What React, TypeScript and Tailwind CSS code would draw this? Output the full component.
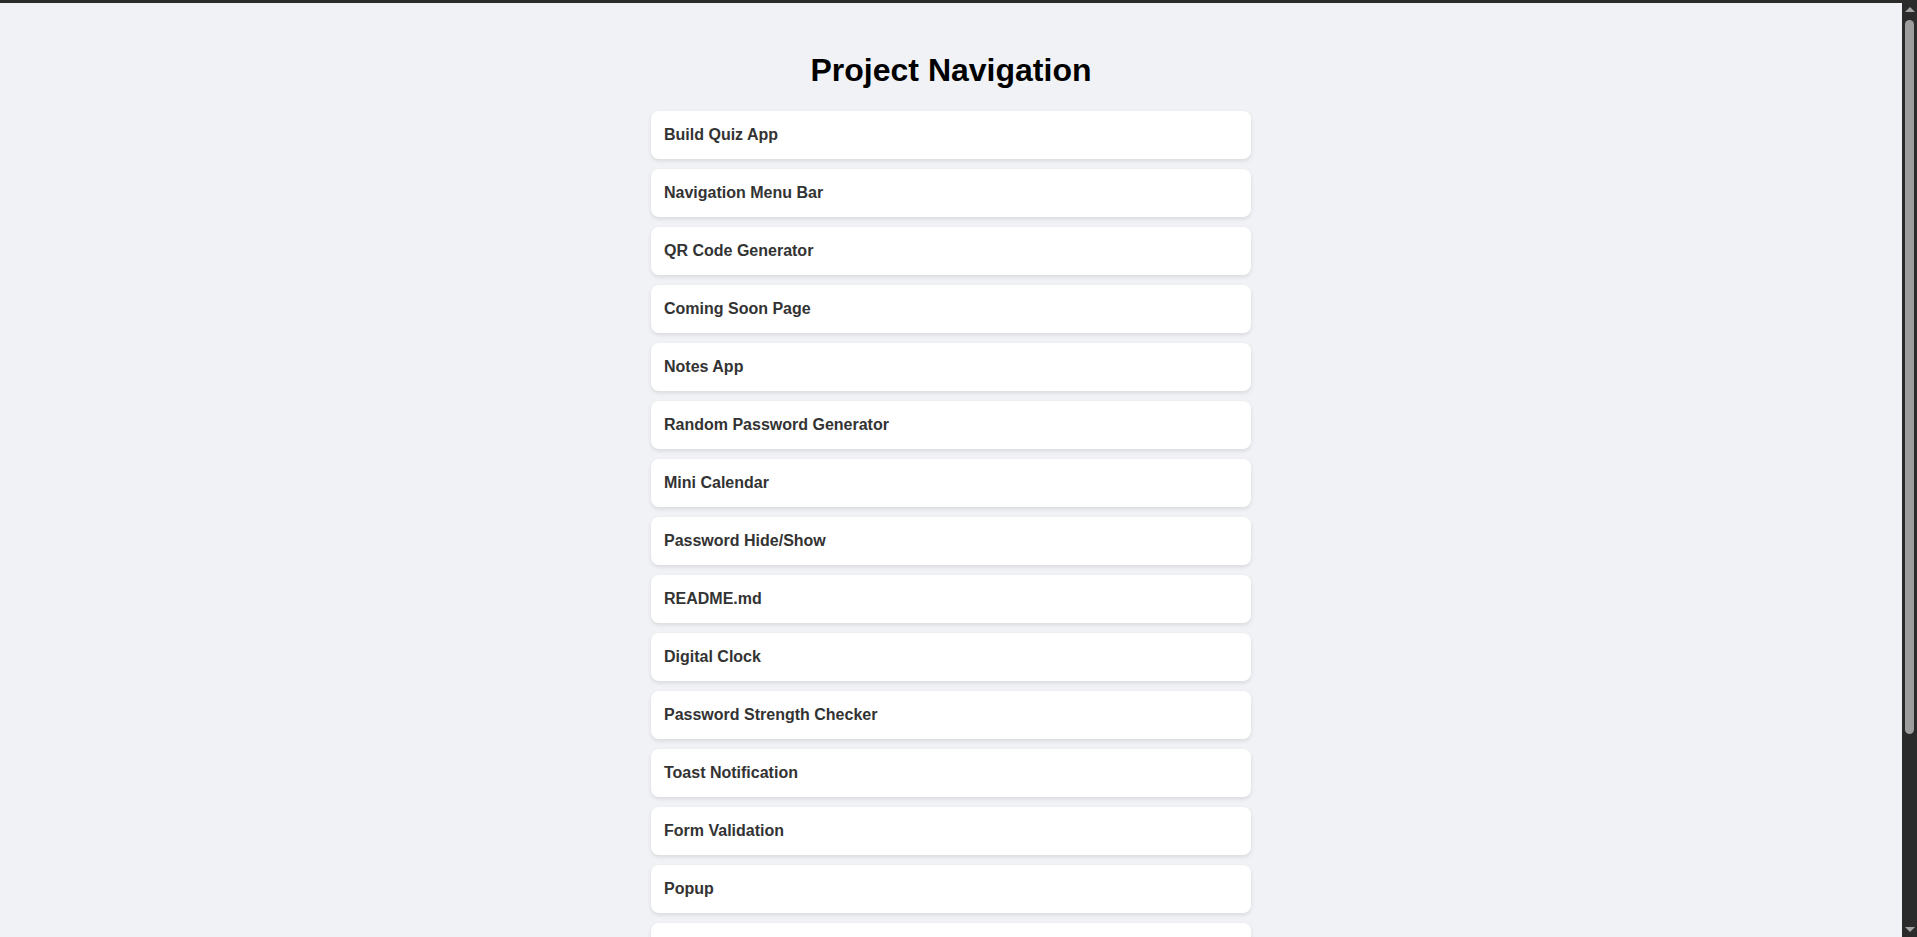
const projects = [
  "Build Quiz App",
  "Navigation Menu Bar",
  "QR Code Generator",
  "Coming Soon Page",
  "Notes App",
  "Random Password Generator",
  "Mini Calendar",
  "Password Hide/Show",
  "README.md",
  "Digital Clock",
  "Password Strength Checker",
  "Toast Notification",
  "Form Validation",
  "Popup",
  "Image Slider",
  "Weather App",
  "To-Do List",
  "Age Calculator",
];

function Scrollbar() {
  // browser-like scrollbar drawn over the right edge
  return (
    <div className="fixed top-0 right-0 h-screen w-[15px] bg-[#2b2b2b] flex flex-col items-center pt-[7px] pb-[5px]">
      <div className="w-0 h-0 border-l-[5px] border-r-[5px] border-b-[5px] border-l-transparent border-r-transparent border-b-[#a3a3a3]" />
      <div className="mt-[8px] h-[714px] w-[9px] rounded-full bg-[#9d9d9d]" />
      <div className="flex-1" />
      <div className="w-0 h-0 border-l-[5px] border-r-[5px] border-t-[5px] border-l-transparent border-r-transparent border-t-[#a3a3a3]" />
    </div>
  );
}

export default function App() {
  return (
    <main className="min-h-screen bg-[#f0f2f5] border-t-[3px] border-[#2b2b2b] pl-5 pr-[35px] pt-[29px] pb-8 font-['Liberation_Sans',Arial,sans-serif]">
      <h1 className="text-center text-[32px] leading-[37px] font-bold text-black mt-[20px] mb-[22px]">
        Project Navigation
      </h1>

      <ul className="mx-auto max-w-[600px] flex flex-col gap-[10px]">
        {projects.map((name) => (
          <li key={name}>
            <a
              href="#"
              className="block bg-white rounded-lg pl-[13px] pr-[14px] py-[15px] text-base leading-[18px] font-bold text-[#333] shadow-[0_2px_4px_rgba(0,0,0,0.1)]"
            >
              {name}
            </a>
          </li>
        ))}
      </ul>

      <Scrollbar />
    </main>
  );
}
